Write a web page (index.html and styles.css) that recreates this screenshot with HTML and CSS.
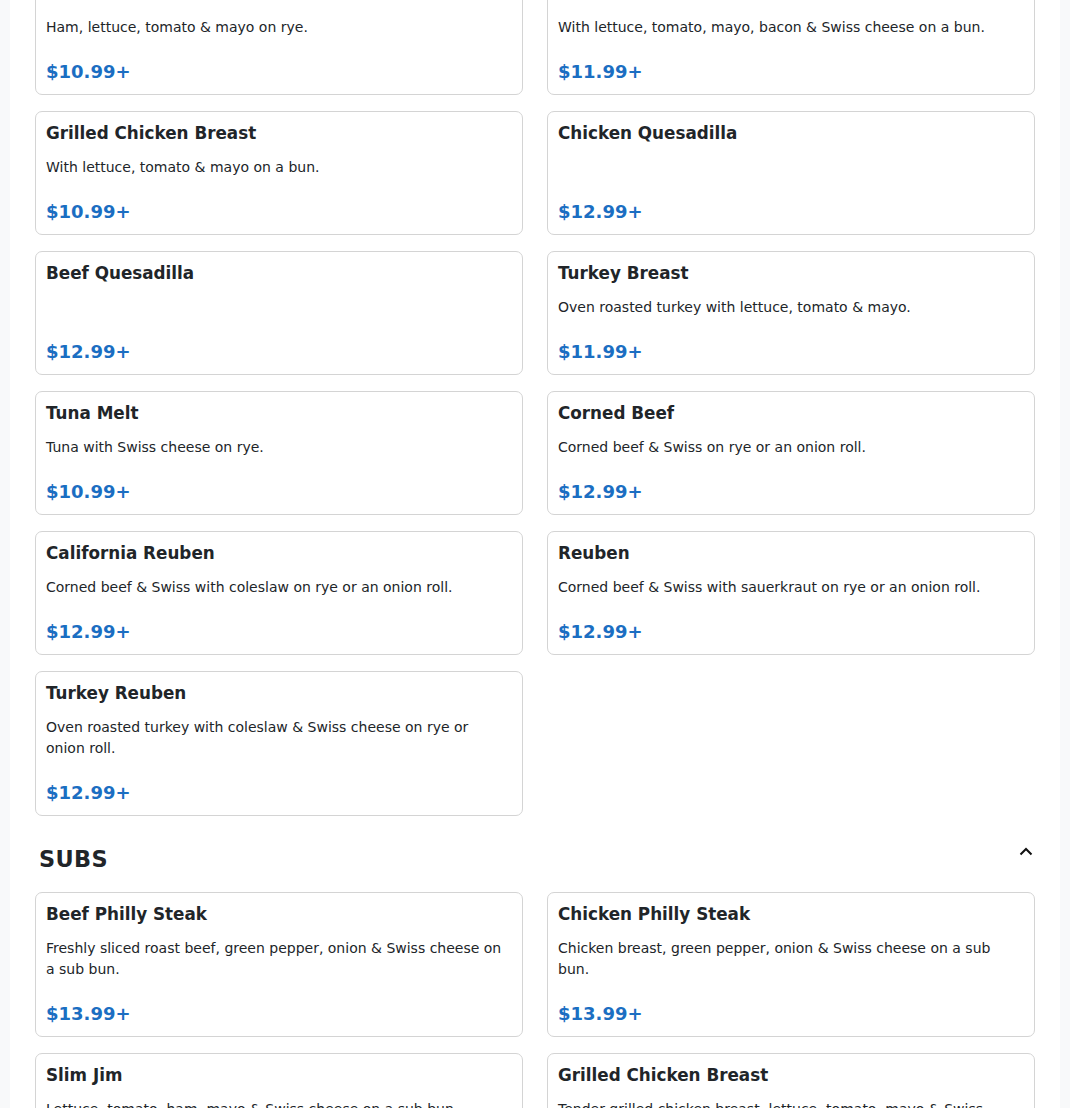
FILE: index.html
```html
<!DOCTYPE html>
<html lang="en">
<head>
<meta charset="utf-8">
<title>Menu</title>
<link rel="stylesheet" href="styles.css">
</head>
<body>
<main class="page">
  <section class="section first">
    <div class="grid">
      <article class="card">
        <h3 class="name">Ham Sandwich</h3>
        <p class="desc">Ham, lettuce, tomato &amp; mayo on rye.</p>
        <div class="price">$10.99+</div>
      </article>
      <article class="card">
        <h3 class="name">Chicken Club Sandwich</h3>
        <p class="desc">With lettuce, tomato, mayo, bacon &amp; Swiss cheese on a bun.</p>
        <div class="price">$11.99+</div>
      </article>
      <article class="card">
        <h3 class="name">Grilled Chicken Breast</h3>
        <p class="desc">With lettuce, tomato &amp; mayo on a bun.</p>
        <div class="price">$10.99+</div>
      </article>
      <article class="card">
        <h3 class="name">Chicken Quesadilla</h3>
        <div class="price">$12.99+</div>
      </article>
      <article class="card">
        <h3 class="name">Beef Quesadilla</h3>
        <div class="price">$12.99+</div>
      </article>
      <article class="card">
        <h3 class="name">Turkey Breast</h3>
        <p class="desc">Oven roasted turkey with lettuce, tomato &amp; mayo.</p>
        <div class="price">$11.99+</div>
      </article>
      <article class="card">
        <h3 class="name">Tuna Melt</h3>
        <p class="desc">Tuna with Swiss cheese on rye.</p>
        <div class="price">$10.99+</div>
      </article>
      <article class="card">
        <h3 class="name">Corned Beef</h3>
        <p class="desc">Corned beef &amp; Swiss on rye or an onion roll.</p>
        <div class="price">$12.99+</div>
      </article>
      <article class="card">
        <h3 class="name">California Reuben</h3>
        <p class="desc">Corned beef &amp; Swiss with coleslaw on rye or an onion roll.</p>
        <div class="price">$12.99+</div>
      </article>
      <article class="card">
        <h3 class="name">Reuben</h3>
        <p class="desc">Corned beef &amp; Swiss with sauerkraut on rye or an onion roll.</p>
        <div class="price">$12.99+</div>
      </article>
      <article class="card">
        <h3 class="name">Turkey Reuben</h3>
        <p class="desc">Oven roasted turkey with coleslaw &amp; Swiss cheese on rye or onion roll.</p>
        <div class="price">$12.99+</div>
      </article>
    </div>
  </section>

  <section class="section">
    <div class="section-head">
      <h2 class="section-title">SUBS</h2>
      <button class="toggle" type="button" aria-label="Collapse">
        <svg width="14" height="9" viewBox="0 0 14 9" aria-hidden="true"><polyline points="1.5,7.5 7,2 12.5,7.5" fill="none" stroke="#111" stroke-width="2"/></svg>
      </button>
    </div>
    <div class="grid">
      <article class="card">
        <h3 class="name">Beef Philly Steak</h3>
        <p class="desc">Freshly sliced roast beef, green pepper, onion &amp; Swiss cheese on a sub bun.</p>
        <div class="price">$13.99+</div>
      </article>
      <article class="card">
        <h3 class="name">Chicken Philly Steak</h3>
        <p class="desc">Chicken breast, green pepper, onion &amp; Swiss cheese on a sub bun.</p>
        <div class="price">$13.99+</div>
      </article>
      <article class="card">
        <h3 class="name">Slim Jim</h3>
        <p class="desc">Lettuce, tomato, ham, mayo &amp; Swiss cheese on a sub bun.</p>
        <div class="price">$12.99+</div>
      </article>
      <article class="card">
        <h3 class="name">Grilled Chicken Breast</h3>
        <p class="desc">Tender grilled chicken breast, lettuce, tomato, mayo &amp; Swiss cheese on a sub bun.</p>
        <div class="price">$13.99+</div>
      </article>
    </div>
  </section>
</main>
</body>
</html>
```
FILE: styles.css
```css
* { box-sizing: border-box; }

html, body {
  margin: 0;
  padding: 0;
  background: #f8f9fa;
  font-family: "DejaVu Sans", "Noto Sans", sans-serif;
  color: #212529;
}

.page {
  max-width: 1050px;
  margin: 0 auto;
  background: #fff;
  padding: 0 25px 40px;
  min-height: 1108px;
}

.section.first {
  margin-top: -29px;
}

.section-head {
  display: flex;
  justify-content: space-between;
  align-items: flex-start;
  margin: 30px 0 19px;
  padding-left: 4px;
}

.section-title {
  margin: 0;
  font-size: 22.4px;
  line-height: 27px;
  font-weight: 700;
  letter-spacing: 0.4px;
}

.toggle {
  border: 0;
  background: transparent;
  padding: 0;
  margin: 1px 2px 0 0;
  width: 14px;
  height: 9px;
  display: flex;
  cursor: pointer;
}

.grid {
  display: grid;
  grid-template-columns: 1fr 1fr;
  column-gap: 24px;
  row-gap: 16px;
}

.card {
  display: flex;
  flex-direction: column;
  border: 1px solid #d4d4d4;
  border-radius: 7px;
  padding: 10px;
  background: #fff;
}

.name {
  margin: 0 0 13px;
  font-size: 16.8px;
  line-height: 22px;
  font-weight: 700;
}

.desc {
  margin: 0;
  font-size: 14px;
  line-height: 21px;
  padding-right: 10px;
}

.price {
  margin-top: auto;
  padding-top: 22px;
  font-size: 18px;
  line-height: 24px;
  font-weight: 700;
  color: #1b6ec2;
}
```
